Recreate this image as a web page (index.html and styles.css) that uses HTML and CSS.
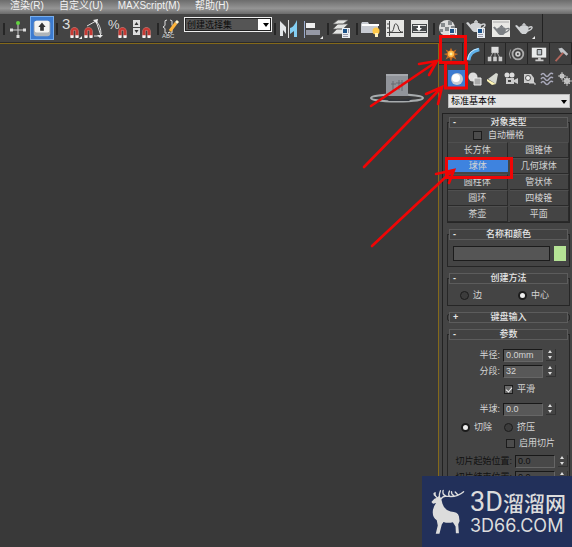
FILE: index.html
```html
<!DOCTYPE html>
<html lang="zh-CN">
<head>
<meta charset="utf-8">
<title>3ds Max</title>
<link rel="stylesheet" href="styles.css">
</head>
<body>
<svg class="defs" aria-hidden="true">
  <defs>
    <symbol id="magnet" viewBox="0 0 10 12"><path d="M2.200 11V4.800a2.800 2.800 0 0 1 5.600 0V11" fill="none" stroke="#d98880" stroke-width="3.600"/><path d="M2.200 11V4.800a2.800 2.800 0 0 1 5.600 0V11" fill="none" stroke="#c83a34" stroke-width="2.600"/><path d="M.5 9h3.400v3H.5zM6.100 9h3.400v3H6.100z" fill="#f2f2f2"/></symbol>
    <symbol id="teapot" viewBox="0 0 20 14"><path d="M5 5Q10 2 15 5q1 5-3 8H8Q6 12 5 10L0 4l2-1 3 3z" fill="currentColor"/><path d="M15 6q4-2 4 0t-5 4M8 3h4M10 1v2" fill="none" stroke="currentColor" stroke-width="1.500"/></symbol>
    <symbol id="dialog" viewBox="0 0 8 10"><path d="M0 0h8v10H0z" fill="#e9eef2"/><path d="M1 1h4v4H1z" fill="#1c5288"/><path d="M1 6.500h5M1 8.500h5M6.500 1v4" stroke="#99a" /></symbol>
  </defs>
</svg>

<nav class="menubar">
  <a href="#">渲染(R)</a><a href="#">自定义(U)</a><a href="#">MAXScript(M)</a><a href="#">帮助(H)</a>
</nav>

<div class="toolbar">
  <i class="sep"></i>
  <button aria-label="操纵"><svg viewBox="0 0 24 24"><path d="M12 7v14M5 14h14" stroke="#ccc"/><path d="M10.500 19h3v3h-3zM4 12.500h3v3H4zM17 12.500h3v3h-3z" fill="#ddd"/><circle cx="12" cy="7" r="2" fill="#62d440"/></svg></button>
  <button class="on" aria-label="键盘快捷键覆盖"><svg viewBox="0 0 24 24"><rect x="3" y="4" width="18" height="17" rx="3" fill="#aeb4b8"/><rect x="4" y="4" width="16" height="13" rx="2" fill="#f4f4f2"/><path d="M12 6l4 5h-2v4h-4v-4H8z" fill="#333"/></svg></button>
  <i class="sep"></i>
  <button aria-label="捕捉开关"><svg viewBox="0 0 24 24"><text class="glyph" x="3" y="13">3</text><use href="#magnet" x="11" y="11" width="9" height="11"/><path d="M23 20v3h-3z" fill="#eee"/></svg></button>
  <button aria-label="角度捕捉"><svg viewBox="0 0 24 24"><path d="M4 10L13 5l5 15h-7M13 5q5 5 5 13" fill="none" stroke="#ddd"/><path d="M10 4l5-1-1 5zM14 19h6l-3 3z" fill="#eee"/><use href="#magnet" x="1" y="11" width="9" height="11"/></svg></button>
  <button aria-label="百分比捕捉"><svg viewBox="0 0 24 24"><text class="glyph small" x="1" y="13">%</text><use href="#magnet" x="11" y="11" width="9" height="11"/></svg></button>
  <button aria-label="微调器捕捉"><svg viewBox="0 0 24 24"><path d="M2 4h7v7H2zM2 12h7v7H2z" fill="#ddd"/><path d="M3.500 9l2-3 2 3zM3.500 14l2 3 2-3z" fill="#333"/><use href="#magnet" x="11" y="11" width="9" height="11"/></svg></button>
  <i class="sep"></i>
  <button aria-label="编辑命名选择集"><svg viewBox="0 0 24 24"><path d="M7 4Q4 4 5 7t-2 4q3 1 2 4t2 2M10 4q3 0 2 3t2 4q-3 1-2 4t-2 2" fill="none" stroke="#ddd"/><path d="M10 15l6-8" stroke="#ffb43a" stroke-width="3"/><path d="M16 7l2-2" stroke="#fff4d0" stroke-width="3"/><path d="M8 17l2-1" stroke="#fff"/><text class="abc" x="2" y="22">ABC</text></svg></button>
  <label class="combo dark"><select aria-label="命名选择集"><option>创建选择集</option></select></label>
  <i class="sep"></i>
  <button aria-label="镜像"><svg viewBox="0 0 24 24"><path d="M3 5l6 6v7l-3-4v6H3z" fill="#e2e5e7"/><path d="M11.500 4v18" stroke="#ddd"/><path d="M20 4v17h-3v-6l-4 3v-6q4-1 7-8z" fill="#84cef2"/></svg></button>
  <button aria-label="对齐"><svg viewBox="0 0 24 24"><path d="M3.500 5v17" stroke="#9ac"/><path d="M5 7h9v5H5z" fill="#eee"/><path d="M5 14h14v5H5z" fill="#9699a5"/><path d="M22 20v3h-3z" fill="#eee"/></svg></button>
  <i class="sep"></i>
  <button aria-label="层管理器"><svg viewBox="0 0 24 24"><path d="M8 4h10l-5 4H3zM8 8h10l-5 5H3zM7 13h9l-4 5H2z" fill="#e3e4e2" stroke="#666" stroke-width=".7"/><use href="#dialog" x="12" y="12" width="8" height="10"/></svg></button>
  <i class="sep"></i>
  <button aria-label="石墨建模工具"><svg viewBox="0 0 24 24"><path d="M3 6h6l1 2h9v9H2V8z" fill="#c8cbd2"/><path d="M3 9h17" stroke="#fff" stroke-width="2"/><circle cx="17" cy="15" r="3.500" fill="#ffc84a"/><path d="M16 17h3v4h-3z" fill="#fff1bd"/></svg></button>
  <button aria-label="曲线编辑器"><svg viewBox="0 0 24 24"><path d="M3 4h18v17H3z" fill="#e6e6e4"/><path d="M6.500 5v15M4 16.500h16M4 8h3M4 12h3M7 16q3 1 4-5t4-1q1 7 5 6" fill="none" stroke="#444"/></svg></button>
  <button aria-label="图解视图"><svg viewBox="0 0 24 24"><path d="M4 4h17v17H4z" fill="#e6e6e4"/><path d="M5 8h15v9H5z" fill="#46494b"/><path d="M6 9h13v1H6zM6 15h13v1H6z" fill="#ddd"/><path d="M11 9h2v3h2l-3 3-3-3h2z" fill="#fff"/></svg></button>
  <i class="sep"></i>
  <button aria-label="材质编辑器"><svg viewBox="0 0 24 24"><circle cx="11" cy="12" r="8" fill="#ddd"/><path d="M5 7h4v4H5zM12 5h4v4h-4zM9 11h4v4H9zM4 13h3v3H4zM15 10h4v3h-4z" fill="#85898c"/><use href="#dialog" x="13" y="12" width="8" height="10"/></svg></button>
  <i class="sep"></i>
  <button aria-label="渲染设置"><svg viewBox="0 0 24 24"><use class="pot" href="#teapot" x="1" y="3" width="20" height="14"/><use href="#dialog" x="12" y="12" width="8" height="10"/></svg></button>
  <button aria-label="渲染帧窗口"><svg viewBox="0 0 24 24"><path d="M3 4h18v17H3z" fill="#e9e9e6"/><path d="M4 6h16" stroke="#aaa"/><use class="pot-line" href="#teapot" x="4" y="8" width="17" height="12"/></svg></button>
  <button aria-label="渲染产品"><svg viewBox="0 0 24 24"><use class="pot" href="#teapot" x="2" y="6" width="18" height="13"/><path d="M22 20v3h-3z" fill="#eee"/></svg></button>
</div>

<div class="workspace">
  <main class="viewport">
    <svg class="viewcube" viewBox="0 0 56 32" aria-hidden="true"><ellipse cx="28" cy="26" rx="26" ry="3.500" fill="none" stroke="#a7abad" stroke-width="2"/><path d="M14 25q14 6 31 0l-5 4H20z" fill="#30343a"/><path d="M17 2h22v22H17z" fill="#91949a"/><path d="M17 2h22v2H17z" fill="#a5a8ad"/><path d="M24 9v9M22 12h5M30 8v10M27 11h8M28 16l7-4M33 8v11" fill="none" stroke="#666a70"/></svg>
  </main>

  <aside class="panel">
    <div class="tabs">
      <button aria-label="创建"><svg viewBox="0 0 20 20"><path d="M10 3l2 4 4-2-2 4 4 1-4 2 2 4-4-2-2 4-2-4-4 2 2-4-4-2 4-1-2-4 4 2z" fill="#c46a20"/><circle cx="10" cy="10" r="3.500" fill="#ffb742"/><circle cx="10" cy="10" r="1.600" fill="#fff0a8"/></svg></button>
      <button aria-label="修改"><svg viewBox="0 0 20 20"><path d="M5 17Q6 7 17 5" fill="none" stroke="#5fb2ea" stroke-width="4"/><path d="M4 16Q5 6 16 4" fill="none" stroke="#d8efff"/></svg></button>
      <button aria-label="层次"><svg viewBox="0 0 20 20"><path d="M6 2h8v7H6z" fill="#ddd"/><path d="M10 8v7M8 8l-4 7M12 8l4 7" stroke="#aaa"/><path d="M2 13h4v5H2zM8 13h4v5H8zM14 13h4v5h-4z" fill="#ccc"/></svg></button>
      <button aria-label="运动"><svg viewBox="0 0 20 20"><circle cx="11" cy="10" r="6" fill="none" stroke="#aaa" stroke-width="2"/><circle cx="11" cy="10" r="3" fill="#ccc"/><circle cx="11" cy="10" r="1" fill="#333"/><path d="M3 5q-3 5 0 10" fill="none" stroke="#999"/></svg></button>
      <button aria-label="显示"><svg viewBox="0 0 20 20"><path d="M2 3h16v11H2z" fill="#e8eaea"/><path d="M8 5h5v6H8z" fill="#bcc4ca" stroke="#333"/><path d="M9 14h3v2h3v2H6v-2h3z" fill="#ccc"/></svg></button>
      <button aria-label="实用程序"><svg viewBox="0 0 20 20"><path d="M4 18L13 8" stroke="#b0655b" stroke-width="2"/><path d="M7 4l4-1 7 7-2 2-4-4-2 1z" fill="#bfc2c6"/></svg></button>
    </div>
    <div class="cats">
      <button class="on" aria-label="几何体"><svg viewBox="0 0 18 18"><circle cx="9" cy="9" r="6" fill="#c9ced4"/><circle cx="8" cy="8" r="4" fill="#fff"/></svg></button>
      <button aria-label="图形"><svg viewBox="0 0 18 18"><circle cx="7" cy="7" r="4.500" fill="#ddd"/><path d="M8 8h7v7H8z" fill="#aaa" stroke="#eee"/></svg></button>
      <button aria-label="灯光"><svg viewBox="0 0 18 18"><path d="M12 3l2 1-2 10-8-5z" fill="#d6d8d0"/><path d="M3 9l9 5-4 1-5-4z" fill="#fff6b6"/></svg></button>
      <button aria-label="摄影机"><svg viewBox="0 0 18 18"><circle cx="5" cy="5" r="2.500" fill="#ddd"/><circle cx="10" cy="5" r="2.500" fill="#ddd"/><path d="M4 8h8v6H4zM12 10l4-2v6l-4-2z" fill="#ccc"/><path d="M6 10h3v2H6z" fill="#444"/></svg></button>
      <button aria-label="辅助对象"><svg viewBox="0 0 18 18"><path d="M4 4h7l3 4v5H4z" fill="#ccc"/><circle cx="8" cy="8" r="2.500" fill="#eee" stroke="#555"/><path d="M9 13h6v2" fill="none" stroke="#ddd"/></svg></button>
      <button aria-label="空间扭曲"><svg viewBox="0 0 18 18"><path d="M3 5q2-3 4 0t4 0 4-1M3 9q2-3 4 0t4 0 4-1M3 13q2-3 4 0t4 0 4-1" fill="none" stroke="#aab" stroke-width="1.400"/></svg></button>
      <button aria-label="系统"><svg viewBox="0 0 18 18"><circle cx="6" cy="6" r="2.500" fill="#ccc"/><circle cx="11" cy="11" r="3" fill="#ccc"/><path d="M6 2v8M2 6h8M11 6v10M6 11h10M8 8l6 6M14 8l-6 6" stroke="#bbb"/></svg></button>
    </div>
    <label class="combo light"><select aria-label="类别"><option>标准基本体</option></select></label>

    <div class="rollouts">
      <section class="rollout">
        <button class="head"><span>-</span>对象类型</button>
        <label class="check autogrid"><input type="checkbox" disabled>自动栅格</label>
        <div class="types">
          <button>长方体</button><button>圆锥体</button>
          <button class="on">球体</button><button>几何球体</button>
          <button>圆柱体</button><button>管状体</button>
          <button>圆环</button><button>四棱锥</button>
          <button>茶壶</button><button>平面</button>
        </div>
      </section>

      <section class="rollout">
        <button class="head"><span>-</span>名称和颜色</button>
        <div class="name"><input type="text" aria-label="名称"><button aria-label="颜色"></button></div>
      </section>

      <section class="rollout">
        <button class="head"><span>-</span>创建方法</button>
        <div class="radios method">
          <label class="check"><input type="radio" name="method">边</label>
          <label class="check"><input type="radio" name="method" checked>中心</label>
        </div>
      </section>

      <section class="rollout closed">
        <button class="head"><span>+</span>键盘输入</button>
      </section>

      <section class="rollout">
        <button class="head"><span>-</span>参数</button>
        <div class="params">
          <div class="field"><label for="radius">半径:</label><input id="radius" type="text" value="0.0mm"><span class="spin"><button aria-label="增加"></button><button aria-label="减少"></button></span></div>
          <div class="field"><label for="segs">分段:</label><input id="segs" type="text" value="32"><span class="spin"><button aria-label="增加"></button><button aria-label="减少"></button></span></div>
          <label class="check smooth"><span class="tick"><input type="checkbox" checked></span>平滑</label>
          <div class="field"><label for="hemi">半球:</label><input id="hemi" type="text" value="0.0"><span class="spin"><button aria-label="增加"></button><button aria-label="减少"></button></span></div>
          <div class="radios cut">
            <label class="check"><input type="radio" name="cut" checked>切除</label>
            <label class="check"><input type="radio" name="cut">挤压</label>
          </div>
          <label class="check slice"><input type="checkbox">启用切片</label>
          <div class="field wide"><label for="from">切片起始位置:</label><input id="from" type="text" value="0.0" disabled><span class="spin"><button aria-label="增加"></button><button aria-label="减少"></button></span></div>
          <div class="field wide"><label for="to">切片结束位置:</label><input id="to" type="text" value="0.0" disabled><span class="spin"><button aria-label="增加"></button><button aria-label="减少"></button></span></div>
        </div>
      </section>
    </div>
  </aside>
</div>

<svg class="marks" viewBox="352 30 220 230" aria-hidden="true">
  <g fill="none" stroke="#f00505" stroke-width="3">
    <path d="M440.500 36.500h25v26h-25zM445.500 63h21v25h-21zM446.500 158.500h65v19h-65z"/>
    <path d="M371 106L436 62M419 64l18-3-8 14M364 167l77-79M426 94l16-7-4 17M372 246l79-74M436 174l18-4-5 13" stroke-width="2.600" stroke-linecap="round"/>
  </g>
</svg>

<div class="brand">
  <svg viewBox="50 115 110 140" aria-hidden="true">
    <path d="M57 157l9-10 10-4 3-5 6 6 4 1-2 5 3 12q5 18 24 23 22 1 25 14l2 14-4 10 2 27h-9l-1-20-8-13q-15 4-28-1l-5 8-7 27h-11l6-24-3-16q-12-8-12-24 0-14 10-27l-9 2z" fill="#dcdcdc"/>
    <path d="M78 146q-12-5-10-17M70 139q-6-3-5-8M81 145q-2-12 3-22M87 146q3-6 14-7 30 6 52-13M101 139q-13-5-9-17M111 140q-5-7 0-16M124 138q-8-4-7-12M136 136l-8-9" fill="none" stroke="#dcdcdc" stroke-width="4" stroke-linecap="round"/>
  </svg>
  <div class="words"><div class="cn"><b>3D</b>溜溜网</div><div class="en">3D66.COM</div></div>
</div>
</body>
</html>
```
FILE: styles.css
```css
* { box-sizing: border-box; }
html, body { height: 100%; }
body {
  margin: 0;
  display: flex;
  flex-direction: column;
  position: relative;
  overflow: hidden;
  background: #444;
  color: #d4d4d4;
  font: 9px/12px "Liberation Sans", "Noto Sans CJK SC", sans-serif;
}
button, input, select { font: inherit; color: inherit; margin: 0; padding: 0; border: 0; border-radius: 0; background: none; }
svg { display: block; }
.defs { position: absolute; width: 0; height: 0; }

.menubar {
  display: flex;
  flex: none;
  gap: 15px;
  height: 14px;
  padding-left: 10px;
  background: linear-gradient(#6c6c6c, #949494 60%, #6a6a6a);
  font-size: 10px;
}
.menubar a { color: #f2f2f2; text-decoration: none; white-space: nowrap; }

.toolbar {
  display: flex;
  flex: none;
  align-self: flex-start;
  height: 29px;
  padding: 2px 5px 0 1px;
  border-right: 1px solid #222;
}
.toolbar button { width: 24px; height: 24px; }
.toolbar button svg { width: 24px; height: 24px; }
.toolbar .on { background: #3c7bd0; border: 1px solid #78aeed; }
.toolbar .on svg { width: 22px; height: 22px; }
.sep { flex: none; width: 2px; height: 12px; margin: 7px 1px 0 2px; background: #262626; }
.glyph { font-size: 15px; fill: #ddd; }
.glyph.small { font-size: 13px; }
.abc { font-size: 6px; fill: #ddd; }
.pot { color: #d0d2d4; }
.pot-line { color: #7c8084; }

.combo { position: relative; display: block; }
.combo select { appearance: none; display: block; width: 100%; height: 100%; padding-left: 2px; line-height: 12px; }
.combo::after {
  content: "";
  position: absolute;
  right: 2px;
  top: 5px;
  border: 3px solid transparent;
  border-top: 4px solid #000;
  border-bottom: 0;
}
.combo.dark { width: 88px; height: 15px; margin-top: 1px; border: 1px solid #eee; outline: 1px solid #222; outline-offset: -2px; background: linear-gradient(#fff, #fff) right / 13px 100% no-repeat #555; }
.combo.dark select { color: #0a0a0a; }
.combo.light { height: 14px; margin: 6px 2px 0 9px; border: 1px solid #bbb; background: #e4e4e4; color: #000; }

.workspace { display: flex; flex: 1; min-height: 0; border-top: 1px solid #2a2a2a; margin-top: -1px; }
.viewport { flex: 1; position: relative; background: #393939; border: solid #84691a; border-width: 1px 1px 0 0; }
.viewcube { position: absolute; right: 13px; top: 28px; width: 56px; height: 32px; }

.panel { flex: none; width: 133px; display: flex; flex-direction: column; overflow: hidden; }
.tabs { display: flex; flex: none; height: 22px; padding-left: 2px; border-bottom: 1px solid #2c2c2c; }
.tabs button { flex: 1; display: grid; place-items: center; border-right: 1px solid #252525; background: #404040; }
.tabs svg { width: 18px; height: 18px; }
.cats { display: flex; flex: none; margin: 5px 0 0 9px; }
.cats button { flex: none; width: 18px; height: 18px; }
.cats .on { background: #3c7bd0; }
.cats svg { width: 18px; height: 18px; }

.rollouts {
  flex: 1;
  display: flex;
  flex-direction: column;
  gap: 6px;
  min-height: 0;
  margin: 5px 0 0 3px;
  padding: 3px 2px 0 4px;
  border: solid #222;
  border-width: 1px 0 0 1px;
}
.rollout { flex: none; position: relative; padding: 0 1px 1px; }
.rollout::before { content: ""; position: absolute; inset: 5px 0 0; border: 1px solid #262626; }
.rollout > * { position: relative; }
.rollout.closed { padding-bottom: 0; }
.rollout.closed::before { inset: 2px 0; border-radius: 2px; }
.head { display: block; width: 119px; height: 11px; margin: 0 auto; border: 1px solid #5c5c5c; background: #424242; color: #e6e6e6; font-weight: 500; line-height: 9px; text-align: center; }
.head span { position: absolute; left: 3px; font-weight: 700; }

.check { display: flex; align-items: center; gap: 6px; height: 16px; white-space: nowrap; }
.check input { appearance: none; flex: none; display: block; width: 9px; height: 9px; border: 1px solid #1c1c1c; background: #4c4c4c; }
.check input[type="radio"] { border-radius: 50%; background: #3c3c3c; }
.check input[type="radio"]:checked { border-width: 2px; background: #eee; }
.check input[type="checkbox"]:checked { background: #6a6a6a; }
.tick { position: relative; }
.tick::after {
  content: "";
  position: absolute;
  left: 3px;
  top: 1px;
  width: 3px;
  height: 5px;
  border: solid #f2f2f2;
  border-width: 0 1px 1px 0;
  transform: rotate(40deg);
}
.autogrid { height: 14px; padding-left: 25px; }
.types { display: grid; grid-template-columns: 1fr 1fr; column-gap: 2px; }
.types button { height: 16px; border: solid #2a2a2a; border-width: 0 1px 1px 0; border-top: 1px solid #4f4f4f; line-height: 14px; }
.types .on { height: 12px; align-self: center; border: 0; background: #3e83df; line-height: 12px; }

.name { display: flex; gap: 4px; padding: 6px 3px 5px 5px; }
.name input { flex: 1; min-width: 0; height: 15px; border: 1px solid #1c1c1c; background: #555; }
.name button { width: 12px; height: 15px; background: #b5e395; }
.radios { display: grid; }
.method { grid-template-columns: 58px 1fr; padding: 3px 0 2px 12px; }
.cut { grid-template-columns: 43px 1fr; padding-left: 13px; margin-top: 2px; }
.cut .check, .method .check { gap: 4px; }

.params { padding-top: 7px; }
.field { display: grid; grid-template-columns: 52px 40px 10px; gap: 3px; align-items: center; height: 16px; }
.field.wide { grid-template-columns: 64px 40px 10px; color: #111; }
.field label { text-align: right; white-space: nowrap; }
.field input { min-width: 0; width: 100%; height: 13px; padding-left: 2px; border: 1px solid; border-color: #181818 #666 #666 #181818; background: #585858; }
.field.wide input { background: #484848; }
.spin { display: grid; gap: 2px; height: 12px; padding: 1px 2px; border: solid #333; border-width: 0 1px 1px 0; }
.spin button { width: 0; height: 3px; border: 2px solid transparent; border-bottom: 3px solid #ddd; border-top: 0; }
.spin button + button { border-top: 3px solid #ddd; border-bottom: 0; }
.smooth { margin: 2px 0 4px; padding-left: 56px; gap: 4px; }
.slice { padding-left: 58px; margin-bottom: 2px; gap: 4px; }

.marks { position: absolute; right: 0; top: 30px; width: 220px; height: 230px; pointer-events: none; }

.brand {
  position: absolute;
  right: 0;
  bottom: 0;
  display: flex;
  gap: 4px;
  width: 150px;
  height: 71px;
  padding: 12px 0 0 7px;
  background: #22305a;
  color: #dcdcdc;
}
.brand svg { width: 37px; height: 47px; }
.cn { display: flex; align-items: center; height: 29px; font: 500 21px/29px "Noto Sans CJK SC", sans-serif; white-space: nowrap; }
.cn b { font: 400 27px/29px Roboto, sans-serif; }
.en { font: 18px/18px Inter, sans-serif; }
```
